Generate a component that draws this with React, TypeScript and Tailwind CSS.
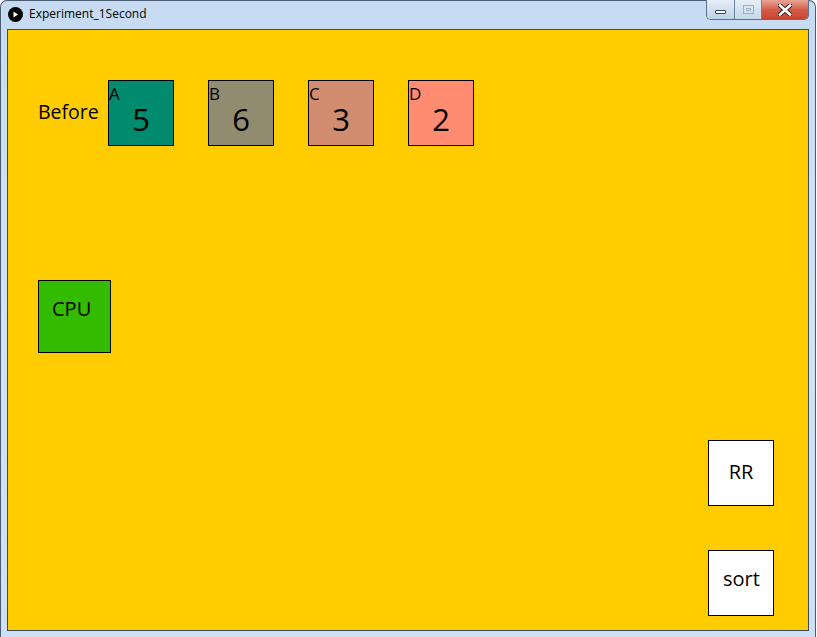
import React from "react";

let boxes = [
  { label: "A", value: 5, color: "bg-[#008a6e]" },
  { label: "B", value: 6, color: "bg-[#918c70]" },
  { label: "C", value: 3, color: "bg-[#d28c70]" },
  { label: "D", value: 2, color: "bg-[#ff8c70]" },
];

let TitleControls: React.FC = () => {
  return (
    <div className="flex h-[20px] -mt-px border border-t-0 border-[#5b6f88] rounded-b-[5px] overflow-hidden">
      <div className="w-[28px] flex items-center justify-center border-r border-[#6e83a0] bg-gradient-to-b from-[#e6eef8] to-[#bfd2e8]">
        <div className="w-[11px] h-[4px] mt-[4px] bg-white border border-[#36465a] rounded-[1px]" />
      </div>
      <div className="w-[27px] flex items-center justify-center border-r border-[#6e83a0] bg-gradient-to-b from-[#e6eef8] to-[#c6d7ea]">
        <div className="w-[11px] h-[9px] border border-[#9fb0c4] flex items-center justify-center">
          <div className="w-[5px] h-[3px] border border-[#9fb0c4]" />
        </div>
      </div>
      <div className="w-[46px] flex items-center justify-center bg-gradient-to-b from-[#e9a597] via-[#d45c47] to-[#c9432f]">
        <svg width="14" height="12" viewBox="0 0 14 12">
          <path
            d="M2 1.5 L12 10.5 M12 1.5 L2 10.5"
            stroke="#3a2a2a"
            strokeWidth="4.5"
            strokeLinecap="square"
          />
          <path
            d="M2 1.5 L12 10.5 M12 1.5 L2 10.5"
            stroke="#ffffff"
            strokeWidth="2.5"
            strokeLinecap="square"
          />
        </svg>
      </div>
    </div>
  );
};

let App: React.FC = () => {
  return (
    <div className="w-[817px] h-[637px] bg-white overflow-hidden font-['Open_Sans',sans-serif]">
      <div className="w-[816px] h-[637px] border border-b-0 border-[#4a5c72] rounded-t-[7px] bg-gradient-to-b from-[#c6dbf2] via-[#d2e3f5] to-[#cddff3] px-[6px]">
        <div className="flex items-start h-[28px]">
          <div className="ml-px mt-[6px] w-[15px] h-[15px] rounded-full bg-black flex items-center justify-center">
            <svg width="7" height="7" viewBox="0 0 7 7">
              <path d="M1.5 0.5 L6 3.5 L1.5 6.5 Z" fill="#ffffff" />
            </svg>
          </div>
          <div className="ml-[6px] mt-[5px] text-[12px] leading-[16px] text-black">
            Experiment_1Second
          </div>
          <div className="flex-1" />
          <TitleControls />
        </div>

        <div className="w-[802px] h-[602px] border border-[#3c4b5e] bg-[#ffcc00] text-black">
          <div className="flex flex-col pl-[30px] pt-[50px]">
            <div className="flex items-start">
              <div className="w-[70px] mt-[22px] text-[19.5px] leading-[20px]">Before</div>
              <div className="flex gap-[34px]">
                {boxes.map((b) => (
                  <div
                    key={b.label}
                    className={"w-[66px] h-[66px] border border-black flex flex-col " + b.color}
                  >
                    <div className="mt-[4px] text-[17px] leading-[17px]">{b.label}</div>
                    <div className="mt-[2px] text-center text-[31px] leading-[31px]">{b.value}</div>
                  </div>
                ))}
              </div>
            </div>

            <div className="mt-[134px] w-[73px] h-[73px] border border-black bg-[#33bb00] pl-[13px] pt-[18px] text-[20px] leading-[20px]">
              CPU
            </div>

            <div className="self-end mr-[34px] mt-[87px] w-[66px] h-[66px] border border-black bg-white pt-[21px] text-center text-[20px] leading-[20px]">
              RR
            </div>
            <div className="self-end mr-[34px] mt-[44px] w-[66px] h-[66px] border border-black bg-white pl-[14px] pt-[18px] text-[20px] leading-[20px]">
              sort
            </div>
          </div>
        </div>
      </div>
    </div>
  );
};

export default App;
